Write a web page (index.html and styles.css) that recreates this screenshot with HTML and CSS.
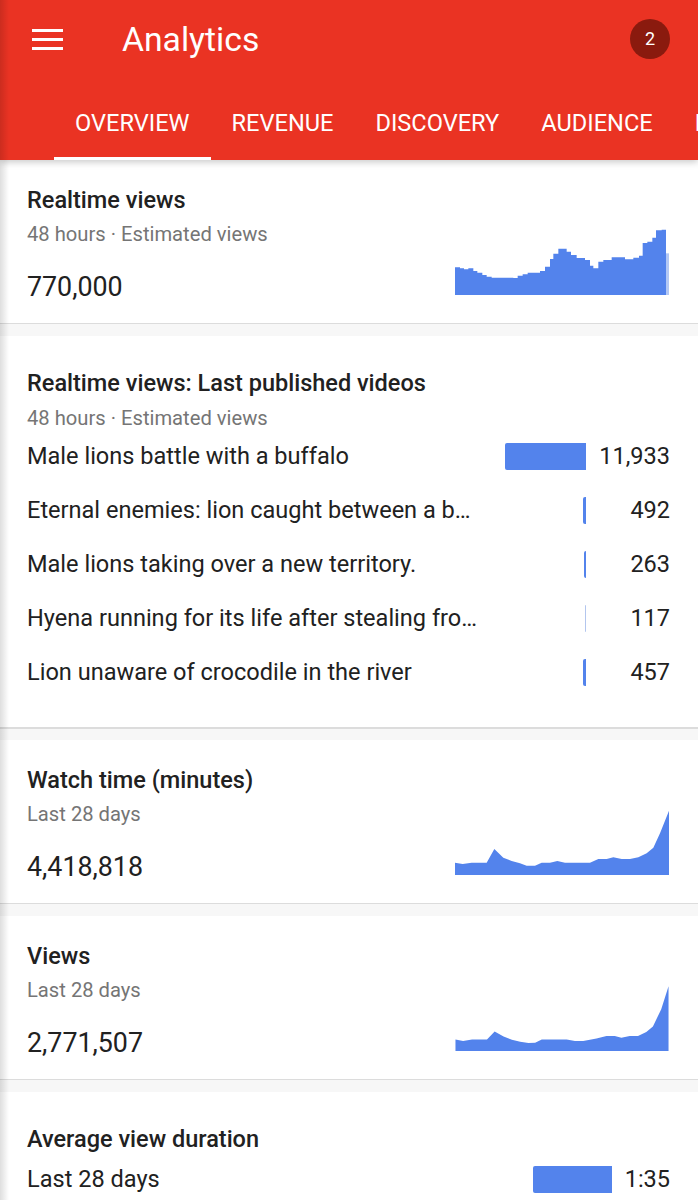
FILE: index.html
```html
<!DOCTYPE html>
<html lang="en">

<head>
    <meta charset="UTF-8">
    <meta name="viewport" content="width=device-width, initial-scale=1.0">
    <title>Analytics</title>
    <link rel="stylesheet" href="styles.css">
</head>

<body>
    <header class="app-header">
        <div class="toolbar">
            <svg class="menu-icon" viewBox="0 0 31 21" width="31" height="21">
                <rect x="0" y="0" width="31" height="3" fill="#fff" />
                <rect x="0" y="9" width="31" height="3" fill="#fff" />
                <rect x="0" y="18" width="31" height="3" fill="#fff" />
            </svg>
            <div class="app-title">Analytics</div>
            <div class="badge">2</div>
        </div>
        <nav class="tabs">
            <div class="tab active">OVERVIEW</div>
            <div class="tab">REVENUE</div>
            <div class="tab">DISCOVERY</div>
            <div class="tab">AUDIENCE</div>
            <div class="tab">DEMOGRAPHICS</div>
        </nav>
    </header>

    <section class="card metric">
        <div class="metric-text">
            <div class="card-title">Realtime views</div>
            <div class="card-sub">48 hours · Estimated views</div>
            <div class="metric-value">770,000</div>
        </div>
        <svg class="spark" viewBox="45 0 645 240" width="215" height="80">
            <path fill="#5383ec" d="M45 240V157H60V160H72V163H85V160H100V168H112V173H127V180H140V185H155V188H220V189H233V182H248V178H263V173H300V168H315V155H330V132H340V116H355V101H380V110H393V120H410V129H435V135H450V152H460V160H475V140H490V135H515V127H555V133H580V128H597V122H608V84H622V80H637V68H648V46H665V44H678V240Z" />
            <path fill="#b3c8f5" d="M678 240V115H687V240Z" />
        </svg>
    </section>

    <section class="card videos">
        <div class="card-title">Realtime views: Last published videos</div>
        <div class="card-sub">48 hours · Estimated views</div>
        <div class="video-list">
            <div class="video-row">
                <div class="video-name">Male lions battle with a buffalo</div>
                <div class="bar" style="width: 81px"></div>
                <div class="video-count">11,933</div>
            </div>
            <div class="video-row">
                <div class="video-name">Eternal enemies: lion caught between a b…</div>
                <div class="bar" style="width: 3.5px"></div>
                <div class="video-count">492</div>
            </div>
            <div class="video-row">
                <div class="video-name">Male lions taking over a new territory.</div>
                <div class="bar" style="width: 2px"></div>
                <div class="video-count">263</div>
            </div>
            <div class="video-row">
                <div class="video-name">Hyena running for its life after stealing fro…</div>
                <div class="bar bar-faint" style="width: 1.5px"></div>
                <div class="video-count">117</div>
            </div>
            <div class="video-row">
                <div class="video-name">Lion unaware of crocodile in the river</div>
                <div class="bar" style="width: 3px"></div>
                <div class="video-count">457</div>
            </div>
        </div>
    </section>

    <section class="card metric">
        <div class="metric-text">
            <div class="card-title">Watch time (minutes)</div>
            <div class="card-sub">Last 28 days</div>
            <div class="metric-value">4,418,818</div>
        </div>
        <svg class="spark" viewBox="45 0 645 240" width="215" height="80">
            <path fill="#5383ec" d="M45 240V203L68 207L95 203H140L163 162L190 188L215 198L240 205L260 212H285L305 203H330L352 198L375 203H450L475 192H500L520 187L545 192H570L595 187L620 175L640 158L660 115L687 47V240Z" />
        </svg>
    </section>

    <section class="card metric">
        <div class="metric-text">
            <div class="card-title">Views</div>
            <div class="card-sub">Last 28 days</div>
            <div class="metric-value">2,771,507</div>
        </div>
        <svg class="spark" viewBox="45 0 645 229" width="215" height="76">
            <path fill="#5383ec" d="M45 229V194L68 199L95 194H140L163 170L190 185L215 195L240 201L265 205L285 204L305 194H380L405 199H430L470 191L500 184H525L545 189L570 184H595L620 172L640 155L665 103L687 34V229Z" />
        </svg>
    </section>

    <section class="card duration">
        <div class="card-title">Average view duration</div>
        <div class="video-row">
            <div class="video-name">Last 28 days</div>
            <div class="bar" style="width: 79px"></div>
            <div class="duration-value">1:35</div>
        </div>
    </section>
</body>

</html>
```

FILE: styles.css
```css
body {
    margin: 0;
    height: 1200px;
    overflow: hidden;
    position: relative;
    background-color: #f7f7f7;
    font-family: Roboto, "Liberation Sans", sans-serif;
    color: #212121;
}

/* soft shadow of the side drawer along the left edge */
body::before {
    content: "";
    position: absolute;
    top: 0;
    left: 0;
    bottom: 0;
    width: 9px;
    z-index: 5;
    background: linear-gradient(to right, rgba(0, 0, 0, 0.13), rgba(0, 0, 0, 0));
}

.app-header {
    position: relative;
    z-index: 2;
    height: 160px;
    background-color: #ea3323;
    box-shadow: 0 2px 7px rgba(0, 0, 0, 0.22);
    overflow: hidden;
}

.toolbar {
    height: 78px;
    display: flex;
    align-items: center;
    padding: 0 28px 0 32px;
}

.menu-icon {
    flex: none;
}

.app-title {
    margin-left: 59px;
    flex: 1;
    font-size: 33.7px;
    color: #fff;
}

.badge {
    width: 40px;
    height: 40px;
    border-radius: 50%;
    background-color: #8a1a0e;
    color: #fff;
    font-size: 18px;
    text-align: center;
    line-height: 40px;
}

.tabs {
    display: flex;
    height: 82px;
    padding-left: 54px;
}

.tab {
    flex: none;
    box-sizing: border-box;
    height: 82px;
    padding: 30px 21px 0;
    font-size: 23.6px;
    line-height: 30px;
    color: #fff;
}

.tab.active {
    border-bottom: 3px solid #fff;
}

.card {
    background-color: #fff;
    padding-left: 27px;
    padding-right: 28px;
    border-bottom: 1px solid #dcdcdc;
    margin-bottom: 12px;
}

.metric {
    display: flex;
    justify-content: space-between;
    align-items: flex-end;
    padding-top: 26px;
    padding-bottom: 18px;
}

.card-title {
    font-size: 23.5px;
    font-weight: 500;
    line-height: 28px;
}

.card-sub {
    margin-top: 8px;
    font-size: 20.2px;
    line-height: 24px;
    color: #757575;
}

.metric-value {
    margin-top: 23px;
    font-size: 26.8px;
    line-height: 36px;
}

.spark {
    display: block;
    margin-bottom: 10px;
}

.videos {
    padding-top: 33px;
    padding-bottom: 29px;
    border-bottom-width: 2px;
    margin-bottom: 11px;
}

.videos .card-sub {
    margin-top: 9px;
}

.video-list {
    display: flex;
    flex-direction: column;
    gap: 2px;
}

.video-row {
    display: grid;
    grid-template-columns: 453px 1fr 84px;
    align-items: center;
    height: 52px;
}

.video-name {
    font-size: 23.55px;
    white-space: nowrap;
}

.bar {
    justify-self: end;
    height: 27px;
    background-color: #5383ec;
    border-radius: 2px 0 0 2px;
}

.bar-faint {
    background-color: #b3c6ee;
}

.video-count,
.duration-value {
    font-size: 23.5px;
    text-align: right;
}

.duration {
    padding-top: 33px;
    margin-bottom: 0;
    border-bottom: none;
}

.duration .video-row {
    grid-template-columns: 1fr auto 58px;
    height: 52px;
}
```
